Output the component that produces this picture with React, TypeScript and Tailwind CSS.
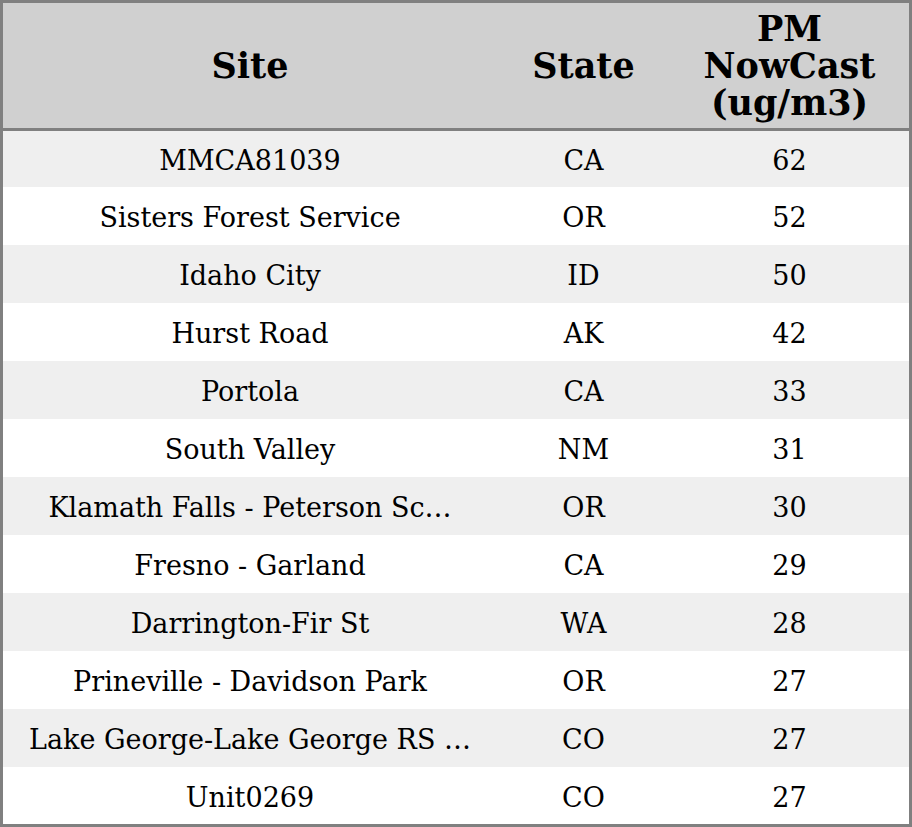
const rows = [
  { site: 'MMCA81039', state: 'CA', pm: 62 },
  { site: 'Sisters Forest Service', state: 'OR', pm: 52 },
  { site: 'Idaho City', state: 'ID', pm: 50 },
  { site: 'Hurst Road', state: 'AK', pm: 42 },
  { site: 'Portola', state: 'CA', pm: 33 },
  { site: 'South Valley', state: 'NM', pm: 31 },
  { site: 'Klamath Falls - Peterson Sc…', state: 'OR', pm: 30 },
  { site: 'Fresno - Garland', state: 'CA', pm: 29 },
  { site: 'Darrington-Fir St', state: 'WA', pm: 28 },
  { site: 'Prineville - Davidson Park', state: 'OR', pm: 27 },
  { site: 'Lake George-Lake George RS …', state: 'CO', pm: 27 },
  { site: 'Unit0269', state: 'CO', pm: 27 },
]

export default function App() {
  return (
    <div
      className="w-[912px] h-[827px] overflow-hidden border-[3px] border-[#808080] bg-white text-black"
      style={{ fontFamily: '"DejaVu Serif", serif' }}
    >
      {/* Header */}
      <div className="grid grid-cols-[494px_173px_1fr] h-[128px] bg-[#d0d0d0] border-b-[3px] border-[#808080] font-bold text-[35px] leading-[37px]">
        <div className="flex items-center justify-center">Site</div>
        <div className="flex items-center justify-center">State</div>
        <div className="flex items-center justify-center text-center">
          PM
          <br />
          NowCast
          <br />
          (ug/m3)
        </div>
      </div>

      {/* Rows */}
      {rows.map((r, i) => (
        <div
          key={r.site}
          className={`grid grid-cols-[494px_173px_1fr] items-center pt-1 text-[27px] ${
            i === 0 ? 'h-[56px]' : 'h-[58px]'
          } ${i % 2 === 0 ? 'bg-[#efefef]' : 'bg-white'}`}
        >
          <div className="text-center px-4 whitespace-nowrap">{r.site}</div>
          <div className="text-center">{r.state}</div>
          <div className="text-center">{r.pm}</div>
        </div>
      ))}
    </div>
  )
}
